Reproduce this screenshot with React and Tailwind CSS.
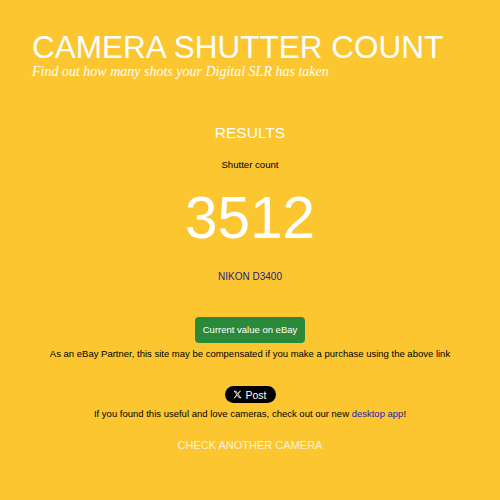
export default function App() {
  return (
    <div className="w-[500px] h-[500px] bg-[#fbc630] overflow-hidden" style={{ fontFamily: '"Liberation Sans", Arial, sans-serif' }}>
      <div className="pl-[32px] pt-[30px]">
        <h1 className="text-[31.5px] leading-[34px] text-white">CAMERA SHUTTER COUNT</h1>
        <p className="mt-[1px] text-[14px] leading-[14px] italic text-white" style={{ fontFamily: '"Liberation Serif", "Times New Roman", serif' }}>
          Find out how many shots your Digital SLR has taken
        </p>
      </div>
      <div className="flex flex-col items-center mt-[45px]">
        <h2 className="text-[15.5px] leading-[18px] text-white">RESULTS</h2>
        <p className="mt-[17px] text-[9.6px] leading-[12px] text-black">Shutter count</p>
        <div className="mt-[14px] text-[58.5px] leading-[66px] text-white">3512</div>
        <a className="mt-[20px] text-[10px] leading-[12px] text-[#2b1a8c]">NIKON D3400</a>
        <button className="mt-[34px] w-[110px] h-[26px] rounded-[4px] bg-[#2b8a3a] text-white text-[9.5px] leading-[12px]">
          Current value on eBay
        </button>
        <p className="mt-[4px] text-[9.5px] leading-[13px] text-black">
          As an eBay Partner, this site may be compensated if you make a purchase using the above link
        </p>
        <div className="mt-[26px] w-[51px] h-[17px] rounded-full bg-black text-white flex items-center justify-center gap-[3px] text-[10.5px] leading-[12px]">
          <svg width="9" height="9" viewBox="0 0 24 24" fill="white">
            <path d="M18.244 2.25h3.308l-7.227 8.26 8.502 11.24H16.17l-5.214-6.817L4.99 21.75H1.68l7.73-8.835L1.254 2.25H8.08l4.713 6.231zm-1.161 17.52h1.833L7.084 4.126H5.117z" />
          </svg>
          <span>Post</span>
        </div>
        <p className="mt-[4px] text-[9.5px] leading-[13px] text-black">
          If you found this useful and love cameras, check out our new <a className="text-[#2b1aab]">desktop app</a>!
        </p>
        <a className="mt-[18px] text-[11px] leading-[14px] text-[#fdf2d8]">CHECK ANOTHER CAMERA</a>
      </div>
    </div>
  );
}
